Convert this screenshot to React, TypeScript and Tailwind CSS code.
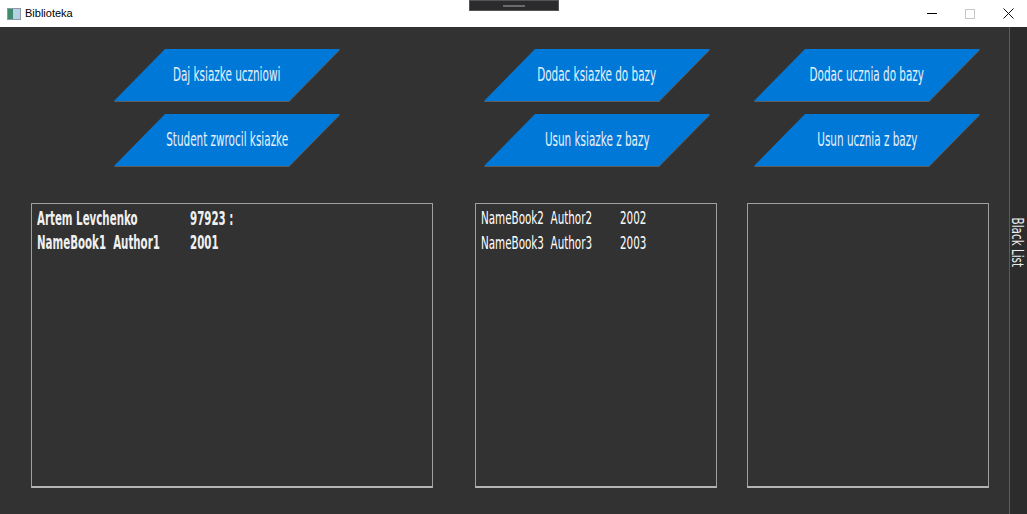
const narrow = "[font-family:'DejaVu_Sans_Condensed','Liberation_Sans_Narrow','DejaVu_Sans',sans-serif]";

function Shape({ label }: { label: string }) {
  return (
    <div className="relative w-[226px] h-[52px]">
      <div className="absolute inset-0 translate-y-[1px] bg-[#5e5e5e] [clip-path:polygon(51px_0,100%_0,calc(100%-51px)_100%,0_100%)]" />
      <div className="absolute inset-0 bg-[#0078d7] [clip-path:polygon(51px_0,100%_0,calc(100%-51px)_100%,0_100%)]" />
      <div className="relative h-full flex items-center justify-center">
        <span
          className={`${narrow} inline-block whitespace-nowrap text-[20px] text-[#e6f0fa] scale-x-[0.58] -translate-y-[1px]`}
        >
          {label}
        </span>
      </div>
    </div>
  );
}

export default function App() {
  return (
    <div className="w-[1027px] h-[514px] flex flex-col bg-[#323232] overflow-hidden">
      {/* title bar */}
      <div className="relative h-[27px] bg-white flex items-center shrink-0">
        <div className="ml-[7px] w-[14px] h-[12px] border border-[#8a9aa8] bg-[#d8e4ec] flex">
          <div className="w-[5px] bg-[#3d8c6e]" />
          <div className="flex-1 bg-[#b8d0e4]" />
        </div>
        <span className="ml-[4px] text-[11px] text-black [font-family:'Liberation_Sans',sans-serif]">Biblioteka</span>
        <div className="absolute left-[469px] top-0 w-[90px] h-[11px] bg-[#2b2b2e] border border-[#555] flex items-center justify-center">
          <div className="w-[22px] h-[2px] bg-[#6a6a6a]" />
        </div>
        <div className="ml-auto flex items-center h-full">
          <div className="w-[38px] h-full flex items-center justify-center">
            <div className="w-[10px] h-px bg-black" />
          </div>
          <div className="w-[38px] h-full flex items-center justify-center">
            <div className="w-[10px] h-[10px] border border-[#c8c8c8]" />
          </div>
          <div className="w-[38px] h-full flex items-center justify-center">
            <svg width="11" height="11" viewBox="0 0 11 11">
              <path d="M0.5 0.5 L10.5 10.5 M10.5 0.5 L0.5 10.5" stroke="#111" strokeWidth="1" />
            </svg>
          </div>
        </div>
      </div>

      <div className="flex flex-1">
        <div className="w-[1009px] shrink-0 flex flex-col">
          <div className="pt-[22px] pl-[114px] flex gap-[144px]">
            <div className="flex flex-col gap-[13px]">
              <Shape label="Daj ksiazke uczniowi" />
              <Shape label="Student zwrocil ksiazke" />
            </div>
            <div className="flex gap-[44px]">
              <div className="flex flex-col gap-[13px]">
                <Shape label="Dodac ksiazke do bazy" />
                <Shape label="Usun ksiazke z bazy" />
              </div>
              <div className="flex flex-col gap-[13px]">
                <Shape label="Dodac ucznia do bazy" />
                <Shape label="Usun ucznia z bazy" />
              </div>
            </div>
          </div>

          <div className="mt-[37px] pl-[31px] flex">
            <div className="w-[402px] h-[285px] border border-[#a0a0a0] border-b-2 border-b-[#b4b4b4] pt-[2px] pl-[5px]">
              {[
                ['Artem Levchenko', '97923 :'],
                ['NameBook1  Author1', '2001'],
              ].map(([a, b]) => (
                <div key={a} className={`${narrow} h-[24px] flex items-center text-[20px] font-bold text-[#f0f0f0]`}>
                  <span className="w-[153px] whitespace-pre inline-block origin-left scale-x-[0.57]">{a}</span>
                  <span className="inline-block origin-left scale-x-[0.57]">{b}</span>
                </div>
              ))}
            </div>
            <div className="ml-[42px] w-[242px] h-[285px] border border-[#a0a0a0] border-b-2 border-b-[#b4b4b4] pt-[1px] pl-[5px]">
              {[
                ['NameBook2  Author2', '2002'],
                ['NameBook3  Author3', '2003'],
              ].map(([a, b]) => (
                <div key={a} className={`${narrow} h-[25px] flex items-center text-[18px] text-white`}>
                  <span className="w-[139px] whitespace-pre inline-block origin-left scale-x-[0.64]">{a}</span>
                  <span className="inline-block origin-left scale-x-[0.64]">{b}</span>
                </div>
              ))}
            </div>
            <div className="ml-[30px] w-[242px] h-[285px] border border-[#a0a0a0] border-b-2 border-b-[#b4b4b4]" />
          </div>
        </div>

        <div className="w-[18px] shrink-0 border-l border-[#5c5c5c] bg-[#2c2c2c] flex items-center justify-center overflow-visible">
          <span className={`${narrow} [writing-mode:vertical-rl] leading-none text-[16px] text-[#ececec] inline-block scale-y-[0.72] -translate-y-[28px] -translate-x-[2px]`}>
            Black List
          </span>
        </div>
      </div>
    </div>
  );
}
